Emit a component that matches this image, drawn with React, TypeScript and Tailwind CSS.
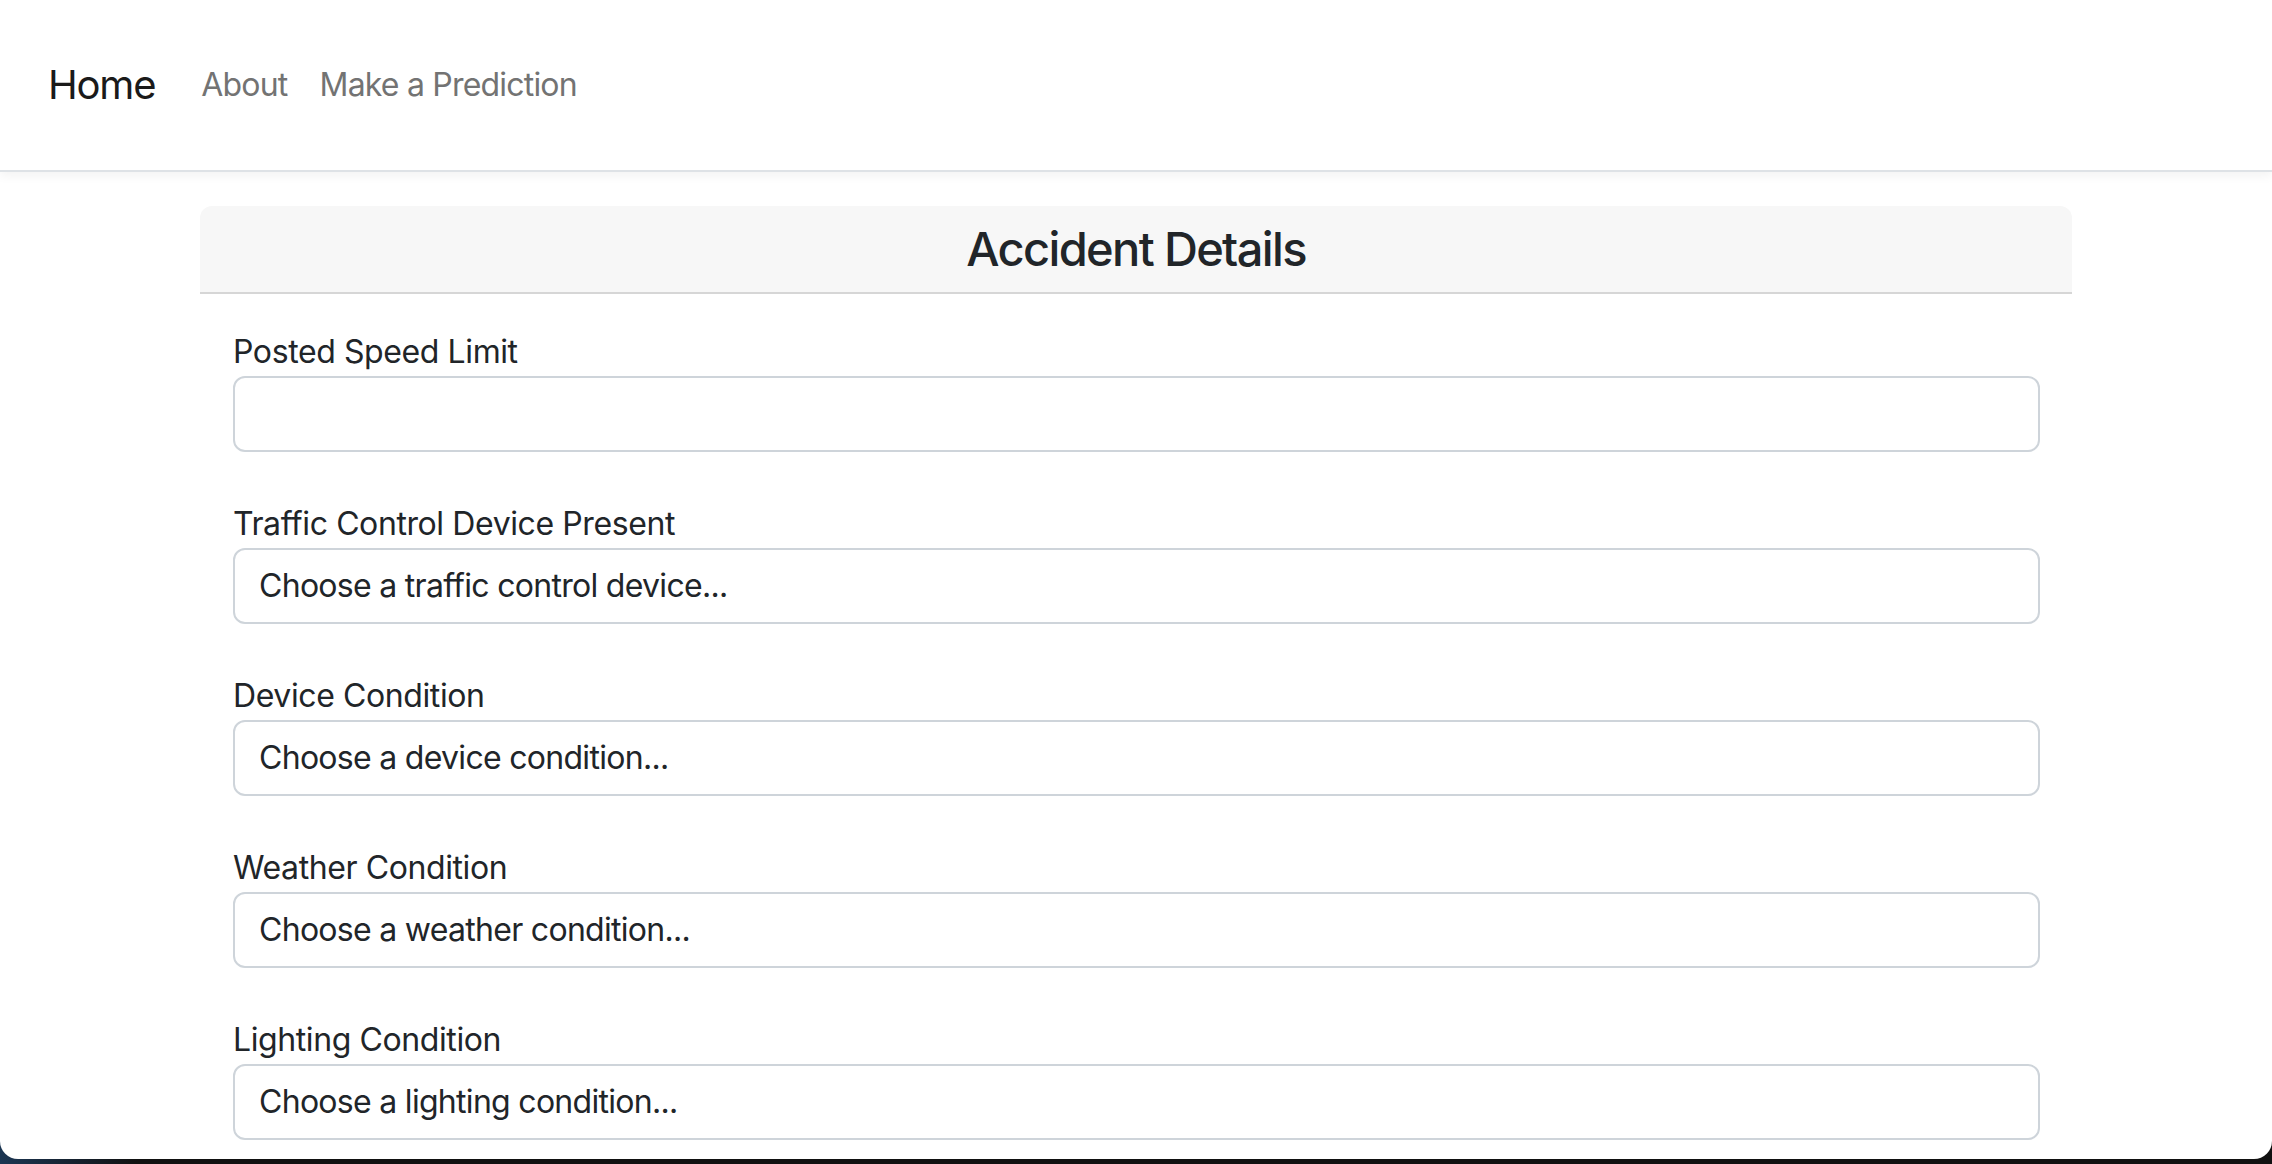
const fields = [
  { label: "Posted Speed Limit", placeholder: "", kind: "input" },
  { label: "Traffic Control Device Present", placeholder: "Choose a traffic control device...", kind: "select" },
  { label: "Device Condition", placeholder: "Choose a device condition...", kind: "select" },
  { label: "Weather Condition", placeholder: "Choose a weather condition...", kind: "select" },
  { label: "Lighting Condition", placeholder: "Choose a lighting condition...", kind: "select" },
];

export default function App() {
  return (
    <div className="h-[1164px] overflow-hidden bg-[linear-gradient(90deg,#1b3552_0%,#111_6%,#111_100%)] font-['Inter','Noto_Sans',sans-serif]">
      <div className="h-[1159px] overflow-hidden rounded-b-[18px] bg-white">
        {/* Navbar */}
        <nav className="flex h-[172px] items-center border-b-2 border-[#dee2e6] bg-white pl-[48px] shadow-[0_4px_10px_rgba(0,0,0,0.05)]">
          <a className="mr-[30px] text-[40px] leading-[60px] tracking-[-0.03em] text-[#1a1a1a]">Home</a>
          <a className="px-4 text-[32px] leading-[48px] tracking-[-0.025em] text-[#737373]">About</a>
          <a className="px-4 text-[32px] leading-[48px] tracking-[-0.025em] text-[#737373]">Make a Prediction</a>
        </nav>

        {/* Card */}
        <div className="mx-[200px] mt-[34px] rounded-t-[12px]">
          <div className="flex h-[88px] items-center justify-center rounded-t-[12px] border-b-2 border-[#d6d6d6] bg-[#f7f7f7]">
            <h4 className="text-[47px] font-medium leading-[1.2] tracking-[-0.035em] text-[#212529]">Accident Details</h4>
          </div>

          <div className="pl-[33px] pr-[32px] pt-[34px] tracking-[-0.025em]">
            {fields.map((f, i) => (
              <div key={i} className="mb-[48px]">
                <label className="block text-[32px] leading-[48px] text-[#212529]">{f.label}</label>
                {f.kind === "input" ? (
                  <input
                    type="text"
                    className="block h-[76px] w-full rounded-[12px] border-2 border-[#ced4da] bg-white px-[24px] text-[32px] text-[#212529] outline-none"
                  />
                ) : (
                  <select className="block h-[76px] w-full appearance-none rounded-[12px] border-2 border-[#ced4da] bg-white px-[24px] text-[32px] tracking-[-0.022em] text-[#212529] outline-none">
                    <option>{f.placeholder}</option>
                  </select>
                )}
              </div>
            ))}
          </div>
        </div>
      </div>
    </div>
  );
}
